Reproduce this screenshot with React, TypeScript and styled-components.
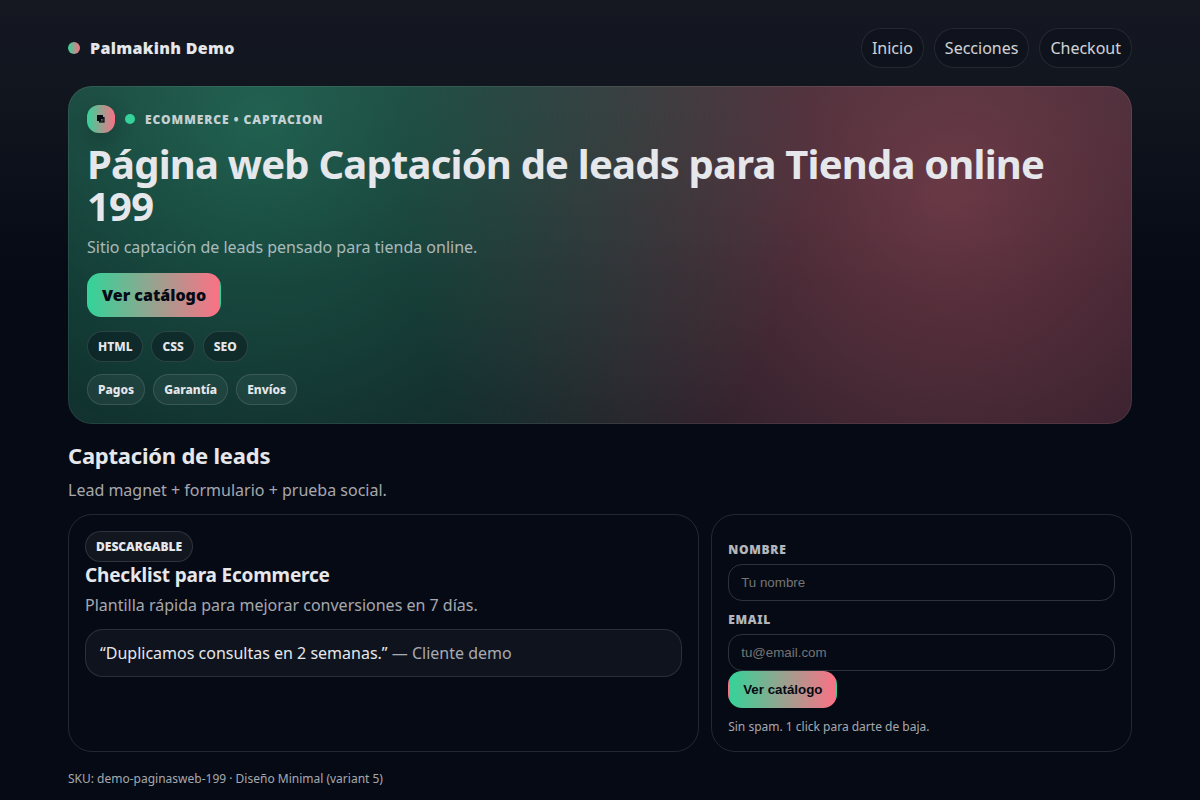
import React from 'react';
import styled, { createGlobalStyle } from 'styled-components';

const GlobalStyle = createGlobalStyle`
  * { box-sizing: border-box; }
  body {
    margin: 0;
    min-height: 100vh;
    font-family: 'Noto Sans', sans-serif;
    font-size: 16px;
    line-height: 22px;
    color: #e5e7eb;
    background: linear-gradient(180deg, #151721 0, #11161f 80px, #050a14 280px) #050a14;
  }
  h1, h2, h3, p { margin: 0; }
`;

const accent = 'linear-gradient(90deg, #34d399, #fb7185)';
const line = 'rgba(255, 255, 255, 0.12)';
const muted = 'rgba(229, 231, 235, 0.72)';

const Page = styled.div`
  max-width: 1100px;
  margin: 0 auto;
  padding: 28px 18px 12px;
`;

const Header = styled.header`
  display: flex;
  align-items: center;
  justify-content: space-between;
  margin-bottom: 18px;
`;

const Brand = styled.div`
  display: flex;
  align-items: center;
  gap: 10px;
  font-weight: 900;
  letter-spacing: 0.02em;
`;

const BrandDot = styled.span`
  width: 12px;
  height: 12px;
  border-radius: 50%;
  background: ${accent};
`;

const Nav = styled.nav`
  display: flex;
  gap: 10px;
`;

const NavLink = styled.a`
  padding: 8px 10px;
  border: 1px solid rgba(255, 255, 255, 0.1);
  border-radius: 999px;
  background: rgba(5, 10, 20, 0.3);
  color: inherit;
  opacity: 0.9;
  text-decoration: none;
`;

const Hero = styled.section`
  padding: 18px;
  border: 1px solid rgba(255, 255, 255, 0.08);
  border-radius: 24px;
  background:
    radial-gradient(circle at 18% 10%, rgba(52, 211, 153, 0.36), transparent 60%) border-box,
    radial-gradient(circle at 83% 32%, rgba(251, 113, 133, 0.36), transparent 60%) border-box,
    linear-gradient(90deg, rgba(52, 211, 153, 0.05), rgba(251, 113, 133, 0.05)) border-box,
    rgba(255, 255, 255, 0.02);
`;

const Eyebrow = styled.div`
  display: flex;
  align-items: center;
  gap: 10px;
  font-size: 12px;
  line-height: 17px;
  font-weight: 900;
  letter-spacing: 0.08em;
  color: rgba(229, 231, 235, 0.86);
  text-transform: uppercase;
`;

const Badge = styled.span`
  display: grid;
  place-items: center;
  width: 28px;
  height: 28px;
  border-radius: 12px;
  background: ${accent};
  box-shadow: 0 8px 20px rgba(0, 0, 0, 0.2);
  color: #050a14;
`;

const StatusDot = styled.span`
  width: 10px;
  height: 10px;
  border-radius: 50%;
  background: #34d399;
`;

const Title = styled.h1`
  margin-top: 10px;
  font-size: 40px;
  line-height: 42px;
  letter-spacing: -0.02em;
`;

const Text = styled.p<{ $top: number }>`
  margin-top: ${({ $top }) => $top}px;
  color: ${muted};
`;

const Action = styled.button`
  display: block;
  padding: 10px 14px;
  border: 1px solid transparent;
  border-radius: 14px;
  background: ${accent};
  color: #050a14;
  font-family: 'Liberation Sans', sans-serif;
  font-weight: 900;
  cursor: pointer;
`;

const ActionLink = styled(Action).attrs({ as: 'a' })<{ href: string }>`
  width: fit-content;
  margin-top: 15px;
  font-family: 'Noto Sans', sans-serif;
  text-decoration: none;
`;

const Chips = styled.div<{ $top: number }>`
  display: flex;
  flex-wrap: wrap;
  gap: 8px;
  margin-top: ${({ $top }) => $top}px;
`;

const Chip = styled.span<{ $dark?: boolean; $heavy?: boolean }>`
  width: fit-content;
  padding: 6px 10px;
  border: 1px solid ${line};
  border-radius: 999px;
  background: ${({ $dark }) => ($dark ? 'rgba(5, 10, 20, 0.35)' : 'rgba(255, 255, 255, 0.05)')};
  font-size: 12px;
  line-height: 17px;
  font-weight: ${({ $heavy }) => ($heavy ? 900 : 800)};
`;

const SectionTitle = styled.h2`
  margin-top: 16px;
  font-size: 22px;
  line-height: 30px;
  letter-spacing: -0.01em;
`;

const Columns = styled.div`
  display: grid;
  grid-template-columns: minmax(0, 3fr) minmax(0, 2fr);
  gap: 12px;
  margin-top: 13px;
`;

const Card = styled.div`
  display: flex;
  flex-direction: column;
  padding: 16px;
  border: 1px solid ${line};
  border-radius: 24px;
`;

const CardTitle = styled.h3`
  font-size: 19px;
  line-height: 26px;
  letter-spacing: -0.01em;
`;

const Quote = styled.div`
  margin-top: 13px;
  padding: 12px 14px;
  border: 1px solid ${line};
  border-radius: 18px;
  background: rgba(255, 255, 255, 0.04);
`;

const Muted = styled.span`
  color: ${muted};
`;

const Form = styled.form`
  display: flex;
  flex-direction: column;
  align-items: flex-start;
`;

const Label = styled.label`
  margin: 10px 0 6px;
  font-size: 12px;
  line-height: 17px;
  font-weight: 900;
  letter-spacing: 0.06em;
  color: rgba(229, 231, 235, 0.8);
  text-transform: uppercase;
`;

const Input = styled.input`
  width: 100%;
  padding: 10px 12px;
  border: 1px solid rgba(255, 255, 255, 0.16);
  border-radius: 14px;
  background: transparent;
  color: inherit;
  font-family: 'Liberation Sans', sans-serif;
  &::placeholder { color: #757575; }
`;

const Small = styled.p<{ $top: number }>`
  margin-top: ${({ $top }) => $top}px;
  font-size: 12px;
  line-height: 17px;
  color: ${muted};
`;

function OverlapIcon() {
  return (
    <svg width="8" height="8" viewBox="0 0 8 8" fill="none" stroke="currentColor" aria-hidden="true">
      <rect x="0.7" y="0.7" width="4.6" height="4.6" strokeWidth="1.4" fill="currentColor" />
      <rect x="2.7" y="2.7" width="4.2" height="4.2" strokeWidth="1.4" />
      <rect x="4.2" y="4.2" width="1.4" height="1.4" fill="#8f9a8b" stroke="none" />
    </svg>
  );
}

export default function App() {
  return (
    <>
      <GlobalStyle />
      <Page>
        <Header>
          <Brand><BrandDot />Palmakinh Demo</Brand>
          <Nav>
            {['Inicio', 'Secciones', 'Checkout'].map((item) => (
              <NavLink key={item} href="#">{item}</NavLink>
            ))}
          </Nav>
        </Header>
        <main>
          <Hero>
            <Eyebrow><Badge><OverlapIcon /></Badge><StatusDot />Ecommerce • Captacion</Eyebrow>
            <Title>Página web Captación de leads para Tienda online 199</Title>
            <Text $top={9}>Sitio captación de leads pensado para tienda online.</Text>
            <ActionLink href="#">Ver catálogo</ActionLink>
            <Chips $top={14}>
              {['HTML', 'CSS', 'SEO'].map((t) => <Chip key={t} $dark>{t}</Chip>)}
            </Chips>
            <Chips $top={12}>
              {['Pagos', 'Garantía', 'Envíos'].map((t) => <Chip key={t}>{t}</Chip>)}
            </Chips>
          </Hero>
          <SectionTitle>Captación de leads</SectionTitle>
          <Text $top={9}>Lead magnet + formulario + prueba social.</Text>
          <Columns>
            <Card>
              <Chip $heavy>DESCARGABLE</Chip>
              <CardTitle>Checklist para Ecommerce</CardTitle>
              <Text $top={6}>Plantilla rápida para mejorar conversiones en 7 días.</Text>
              <Quote>“Duplicamos consultas en 2 semanas.” <Muted>— Cliente demo</Muted></Quote>
            </Card>
            <Card>
              <Form onSubmit={(e) => e.preventDefault()}>
                <Label htmlFor="nombre">Nombre</Label>
                <Input id="nombre" type="text" placeholder="Tu nombre" />
                <Label htmlFor="email">Email</Label>
                <Input id="email" type="email" placeholder="tu@email.com" />
                <Action type="submit">Ver catálogo</Action>
              </Form>
              <Small $top={10}>Sin spam. 1 click para darte de baja.</Small>
            </Card>
          </Columns>
        </main>
        <footer>
          <Small $top={18}>SKU: demo-paginasweb-199 · Diseño Minimal (variant 5)</Small>
        </footer>
      </Page>
    </>
  );
}
